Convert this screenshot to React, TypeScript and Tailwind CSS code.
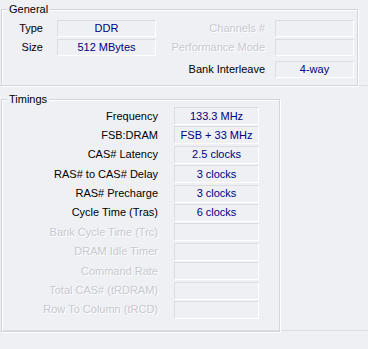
const valueBox =
  'flex h-full items-center justify-center border-t border-l border-[#dcdde3] border-b border-r border-b-white border-r-white text-[#000080]'

const disabled = 'text-[#c8c9d0] [text-shadow:1px_1px_0_#fff]'

interface Field {
  label: string
  value?: string
  off?: boolean
}

const timings: Field[] = [
  { label: 'Frequency', value: '133.3 MHz' },
  { label: 'FSB:DRAM', value: 'FSB + 33 MHz' },
  { label: 'CAS# Latency', value: '2.5 clocks' },
  { label: 'RAS# to CAS# Delay', value: '3 clocks' },
  { label: 'RAS# Precharge', value: '3 clocks' },
  { label: 'Cycle Time (Tras)', value: '6 clocks' },
  { label: 'Bank Cycle Time (Trc)', off: true },
  { label: 'DRAM Idle Timer', off: true },
  { label: 'Command Rate', off: true },
  { label: 'Total CAS# (tRDRAM)', off: true },
  { label: 'Row To Column (tRCD)', off: true },
]

function GroupBox({ title, className, children }: { title: string; className: string; children: React.ReactNode }) {
  return (
    <div
      className={[
        'relative ml-[1px] border border-[#d3d4db] shadow-[inset_1px_1px_0_#fff,1px_1px_0_#fff]',
        className,
      ].join(' ')}
    >
      <span className="absolute left-[5px] top-[-8px] bg-[#eff0f4] px-[2px] leading-[14px] text-black">{title}</span>
      {children}
    </div>
  )
}

function Row({ f, labelW, gap, boxW, h }: { f: Field; labelW: string; gap: string; boxW: string; h: string }) {
  return (
    <div className={['flex items-center', h].join(' ')}>
      <span className={['text-right whitespace-nowrap', labelW, f.off ? disabled : 'text-black'].join(' ')}>
        {f.label}
      </span>
      <div className={['h-full', gap, boxW].join(' ')}>
        <div className={valueBox}>{f.value}</div>
      </div>
    </div>
  )
}

export default function App() {
  return (
    <div
      className="h-[349px] w-[368px] overflow-hidden bg-[#eff0f4] pt-[9px] text-[11px] leading-[13px]"
      style={{ fontFamily: '"Liberation Sans", Arial, sans-serif' }}
    >
      <GroupBox title="General" className="h-[77px] w-[357px]">
        <div className="flex pt-[10px]">
          <div className="flex flex-col gap-[2px]">
            <Row f={{ label: 'Type', value: 'DDR' }} labelW="w-[41px]" gap="ml-[14px]" boxW="w-[99px]" h="h-[17px]" />
            <Row f={{ label: 'Size', value: '512 MBytes' }} labelW="w-[41px]" gap="ml-[14px]" boxW="w-[99px]" h="h-[17px]" />
          </div>
          <div className="flex flex-col">
            <Row f={{ label: 'Channels #', off: true }} labelW="w-[109px]" gap="ml-[10px]" boxW="w-[79px]" h="h-[17px]" />
            <div className="mt-[2px]">
              <Row f={{ label: 'Performance Mode', off: true }} labelW="w-[109px]" gap="ml-[10px]" boxW="w-[79px]" h="h-[17px]" />
            </div>
            <div className="mt-[5px]">
              <Row f={{ label: 'Bank Interleave', value: '4-way' }} labelW="w-[109px]" gap="ml-[10px]" boxW="w-[79px]" h="h-[17px]" />
            </div>
          </div>
        </div>
      </GroupBox>
      <div className="mt-[-1px] h-px bg-[#dcdde3]" />

      <GroupBox title="Timings" className="mt-[13px] h-[233px] w-[279px]">
        <div className="grid auto-rows-[18px] gap-y-[1.4px] pt-[7px]">
          {timings.map((f) => (
            <Row key={f.label} f={f} labelW="w-[156px]" gap="ml-[16px]" boxW="w-[85px]" h="h-[18px]" />
          ))}
        </div>
      </GroupBox>
      <div className="mt-[-2px] h-px bg-[#dcdde3]" />
    </div>
  )
}
